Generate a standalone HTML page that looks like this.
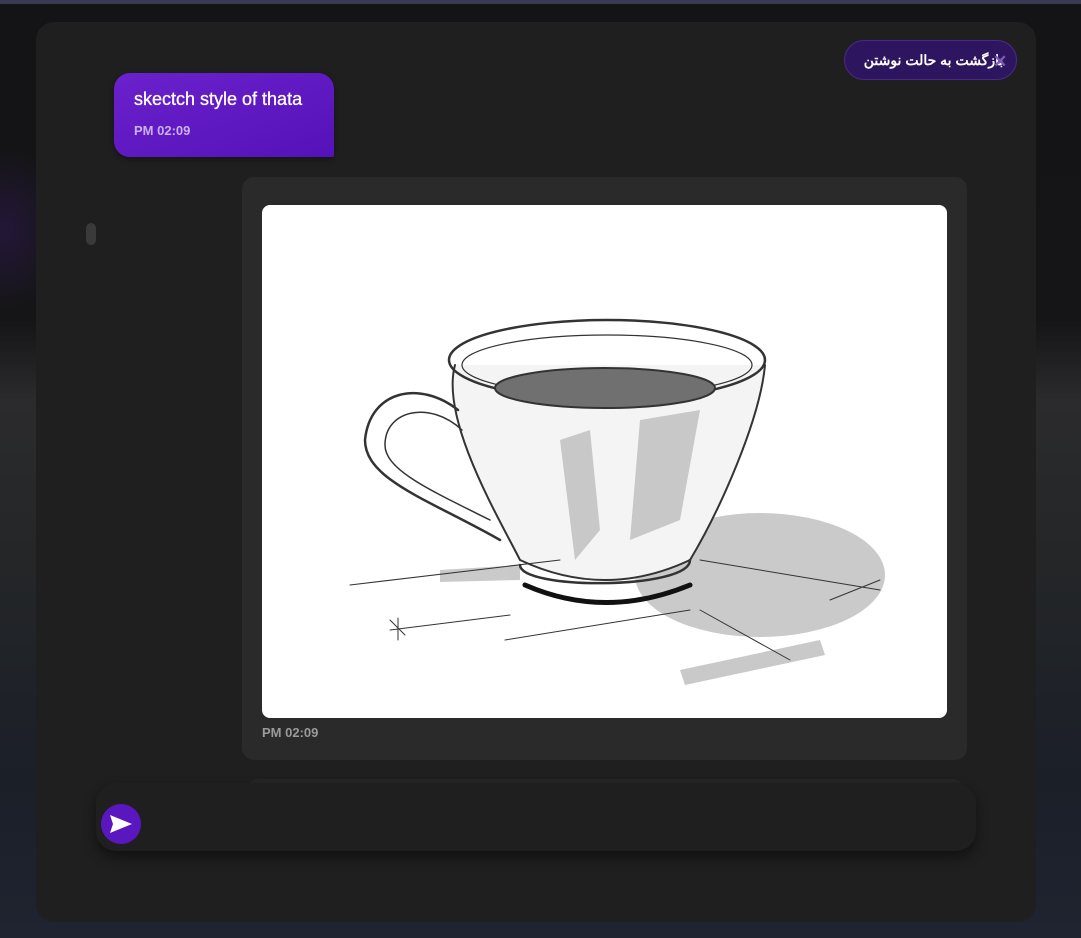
<!DOCTYPE html>
<html><head><meta charset="utf-8"><style>
*{margin:0;padding:0;box-sizing:border-box}
html,body{width:1081px;height:938px;overflow:hidden}
body{background:#17171a;font-family:"Liberation Sans","Noto Sans CJK SC",sans-serif;position:relative}
.bg{position:absolute;inset:0;background:
radial-gradient(ellipse 60px 80px at 5px 230px,#3a1a6a66,transparent),
linear-gradient(180deg,#141416 0,#151517 320px,#2b2b2d 400px,#242628 560px,#1b1f28 780px,#1f2430 938px)}
.top{position:absolute;left:0;top:0;width:1081px;height:4px;background:#3a3a55}
.panel{position:absolute;left:36px;top:22px;width:1000px;height:900px;background:#1f1f1f;border-radius:18px}
.pill{position:absolute;left:844px;top:40px;width:173px;height:40px;border-radius:20px;background:#2e1560;border:1px solid #4a2a85;color:#fff;font-size:14px;font-weight:bold;text-align:center;line-height:38px;direction:rtl;padding-left:6px}
.x{position:absolute;left:993px;top:52px;color:#7a5ab5;font-size:17px;font-weight:bold}
.bub{position:absolute;left:114px;top:73px;width:220px;height:84px;border-radius:16px 16px 2px 16px;background:linear-gradient(160deg,#6b21cc,#5512b8);box-shadow:0 2px 6px #0006}
.bub .t{position:absolute;left:20px;top:16px;color:#fff;font-size:18px;-webkit-text-stroke:.3px #fff}
.bub .m{position:absolute;left:20px;top:50px;color:#c9b2ee;font-size:13px;font-weight:bold}
.sb{position:absolute;left:86px;top:223px;width:10px;height:22px;border-radius:5px;background:#3a3a3a}
.card{position:absolute;left:242px;top:177px;width:725px;height:583px;background:#2a2a2a;border-radius:12px}
.img{position:absolute;left:262px;top:205px;width:685px;height:513px;background:#fff;border-radius:8px;overflow:hidden}
.tm{position:absolute;left:262px;top:725px;color:#9a9a9a;font-size:13px;font-weight:bold}
.ghost{position:absolute;left:248px;top:779px;width:715px;height:20px;border-radius:10px;background:#262626}
.input{position:absolute;left:96px;top:783px;width:880px;height:68px;border-radius:20px;background:#1f1f1f;box-shadow:0 6px 12px #0007}
.send{position:absolute;left:101px;top:804px;width:40px;height:40px;border-radius:50%;background:#5a17c0}
</style></head><body>
<div class="bg"></div><div class="top"></div>
<div class="panel"></div>
<div class="pill">بازگشت به حالت نوشتن</div>
<div class="x">✕</div>
<div class="bub"><div class="t">skectch style of thata</div><div class="m">PM 02:09</div></div>
<div class="sb"></div>
<div class="card"></div>
<div class="img"><svg width="685" height="513" viewBox="262 205 685 513">
<g fill="#666" opacity=".35"><ellipse cx="760" cy="575" rx="125" ry="62"/><path d="M440 570 L520 565 L520 580 L440 582Z"/><path d="M680 670 L820 640 L825 655 L685 685Z"/></g>
<g fill="none" stroke="#333" stroke-linecap="round">
<path d="M455 365 C440 420 500 520 520 560 Q605 600 690 560 C720 510 760 420 765 365" stroke-width="2" fill="#f4f4f4"/>
<ellipse cx="607" cy="360" rx="158" ry="40" stroke-width="2.5"/>
<ellipse cx="607" cy="365" rx="145" ry="30" stroke-width="1.2"/>
<ellipse cx="605" cy="388" rx="110" ry="20" fill="#707070" stroke-width="2"/>
<path d="M520 565 C520 590 690 590 690 560" stroke-width="2.5"/>
<path d="M525 585 Q605 620 690 585" stroke="#111" stroke-width="5"/>
<path d="M458 410 C420 380 370 390 365 440 C365 480 430 500 500 540" stroke-width="2.5"/>
<path d="M462 430 C430 400 385 410 385 445 C385 470 430 490 490 520" stroke-width="1.5"/>
<path d="M350 585 L560 560 M390 630 L510 615 M505 640 L690 610 M700 560 L880 590 M700 610 L790 660 M830 600 L880 580" stroke-width="1"/>
<path d="M390 620 L405 635 M398 618 L398 640" stroke-width="1"/>
</g>
<g fill="#888" opacity=".4"><path d="M560 440 L590 430 L600 530 L575 560Z"/><path d="M640 420 L700 410 L680 520 L630 540Z"/></g>
</svg></div>
<div class="tm">PM 02:09</div>
<div class="ghost"></div>
<div class="input"></div>
<div class="send"><svg width="40" height="40" viewBox="0 0 40 40"><path d="M9 11 L31 20 L9 29 L12 20Z" fill="#fff"/></svg></div>
</body></html>
